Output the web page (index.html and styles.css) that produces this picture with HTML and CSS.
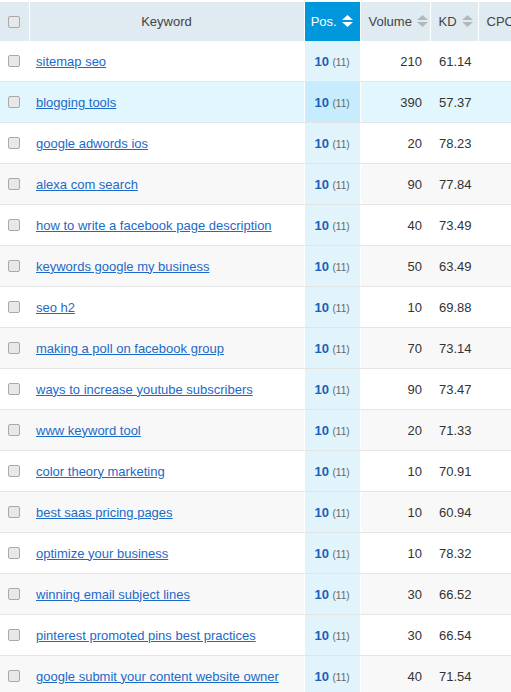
FILE: index.html
```html
<!DOCTYPE html>
<html>
<head>
<meta charset="utf-8">
<link rel="stylesheet" href="styles.css">
</head>
<body>
<div class="wrap">
<table class="kw">
  <colgroup>
    <col class="c-chk"><col class="c-kw"><col class="c-pos"><col class="c-vol"><col class="c-kd"><col class="c-cpc">
  </colgroup>
  <thead>
    <tr>
      <th class="chk"><span class="box"></span></th>
      <th class="th-kw">Keyword</th>
      <th class="th-pos">Pos. <svg class="sort" width="11" height="12" viewBox="0 0 11 12"><path d="M5.5 0 L11 5 L0 5 Z M0 7 L11 7 L5.5 12 Z" fill="#fff"/></svg></th>
      <th class="th-l">Volume <svg class="sort" width="11" height="12" viewBox="0 0 11 12"><path d="M5.5 0 L11 5 L0 5 Z M0 7 L11 7 L5.5 12 Z" fill="#b4b8bb"/></svg></th>
      <th class="th-l">KD <svg class="sort" width="11" height="12" viewBox="0 0 11 12"><path d="M5.5 0 L11 5 L0 5 Z M0 7 L11 7 L5.5 12 Z" fill="#b4b8bb"/></svg></th>
      <th class="th-l">CPC</th>
    </tr>
  </thead>
  <tbody>
    <tr><td class="chk"><span class="box"></span></td><td><a href="#">sitemap seo</a></td><td class="pos"><b>10</b> <small>(11)</small></td><td class="vol">210</td><td class="kd">61.14</td><td></td></tr>
    <tr class="hl"><td class="chk"><span class="box"></span></td><td><a href="#">blogging tools</a></td><td class="pos"><b>10</b> <small>(11)</small></td><td class="vol">390</td><td class="kd">57.37</td><td></td></tr>
    <tr><td class="chk"><span class="box"></span></td><td><a href="#">google adwords ios</a></td><td class="pos"><b>10</b> <small>(11)</small></td><td class="vol">20</td><td class="kd">78.23</td><td></td></tr>
    <tr class="alt"><td class="chk"><span class="box"></span></td><td><a href="#">alexa com search</a></td><td class="pos"><b>10</b> <small>(11)</small></td><td class="vol">90</td><td class="kd">77.84</td><td></td></tr>
    <tr><td class="chk"><span class="box"></span></td><td><a href="#">how to write a facebook page description</a></td><td class="pos"><b>10</b> <small>(11)</small></td><td class="vol">40</td><td class="kd">73.49</td><td></td></tr>
    <tr class="alt"><td class="chk"><span class="box"></span></td><td><a href="#">keywords google my business</a></td><td class="pos"><b>10</b> <small>(11)</small></td><td class="vol">50</td><td class="kd">63.49</td><td></td></tr>
    <tr><td class="chk"><span class="box"></span></td><td><a href="#">seo h2</a></td><td class="pos"><b>10</b> <small>(11)</small></td><td class="vol">10</td><td class="kd">69.88</td><td></td></tr>
    <tr class="alt"><td class="chk"><span class="box"></span></td><td><a href="#">making a poll on facebook group</a></td><td class="pos"><b>10</b> <small>(11)</small></td><td class="vol">70</td><td class="kd">73.14</td><td></td></tr>
    <tr><td class="chk"><span class="box"></span></td><td><a href="#">ways to increase youtube subscribers</a></td><td class="pos"><b>10</b> <small>(11)</small></td><td class="vol">90</td><td class="kd">73.47</td><td></td></tr>
    <tr class="alt"><td class="chk"><span class="box"></span></td><td><a href="#">www keyword tool</a></td><td class="pos"><b>10</b> <small>(11)</small></td><td class="vol">20</td><td class="kd">71.33</td><td></td></tr>
    <tr><td class="chk"><span class="box"></span></td><td><a href="#">color theory marketing</a></td><td class="pos"><b>10</b> <small>(11)</small></td><td class="vol">10</td><td class="kd">70.91</td><td></td></tr>
    <tr class="alt"><td class="chk"><span class="box"></span></td><td><a href="#">best saas pricing pages</a></td><td class="pos"><b>10</b> <small>(11)</small></td><td class="vol">10</td><td class="kd">60.94</td><td></td></tr>
    <tr><td class="chk"><span class="box"></span></td><td><a href="#">optimize your business</a></td><td class="pos"><b>10</b> <small>(11)</small></td><td class="vol">10</td><td class="kd">78.32</td><td></td></tr>
    <tr class="alt"><td class="chk"><span class="box"></span></td><td><a href="#">winning email subject lines</a></td><td class="pos"><b>10</b> <small>(11)</small></td><td class="vol">30</td><td class="kd">66.52</td><td></td></tr>
    <tr><td class="chk"><span class="box"></span></td><td><a href="#">pinterest promoted pins best practices</a></td><td class="pos"><b>10</b> <small>(11)</small></td><td class="vol">30</td><td class="kd">66.54</td><td></td></tr>
    <tr class="alt"><td class="chk"><span class="box"></span></td><td><a href="#">google submit your content website owner</a></td><td class="pos"><b>10</b> <small>(11)</small></td><td class="vol">40</td><td class="kd">71.54</td><td></td></tr>
  </tbody>
</table>
</div>
</body>
</html>
```
FILE: styles.css
```css
html, body {
  margin: 0;
  padding: 0;
  background: #fff;
  overflow: hidden;
}
.wrap {
  width: 511px;
  overflow: hidden;
  padding-top: 2px;
}
.kw {
  border-collapse: collapse;
  table-layout: fixed;
  width: 560px;
  font-family: "Liberation Sans", Arial, sans-serif;
  font-size: 13px;
  color: #333;
}
.c-chk { width: 29px; }
.c-kw { width: 275px; }
.c-pos { width: 56px; }
.c-vol { width: 70px; }
.c-kd { width: 48px; }
.c-cpc { width: 82px; }
thead th {
  height: 39px;
  padding: 0;
  background: #dfeaf1;
  border-left: 1px solid #fff;
  font-weight: normal;
  color: #444;
  white-space: nowrap;
}
thead th:first-child { border-left: none; }
.th-kw { text-align: center; }
.th-l { text-align: left; padding-left: 8px; }
.th-pos {
  background: #0097dc;
  color: #fff;
  text-align: center;
}
.sort {
  vertical-align: -1px;
  margin-left: 2px;
}
tbody td {
  height: 40px;
  padding: 0;
  border-bottom: 1px solid #e4e4e4;
  background: #fff;
  white-space: nowrap;
}
tbody tr.alt td { background: #f8f8f8; }
tbody tr.hl td {
  background-color: #e2f6fe;
  background-image: radial-gradient(#d7eff9 0.5px, transparent 0.7px);
  background-size: 4px 4px;
}
.chk { padding-left: 8px !important; }
.box {
  display: block;
  width: 10px;
  height: 10px;
  border: 1px solid #a9a9a9;
  border-radius: 2px;
  background: #e8e8e8;
}
tbody td a {
  color: #1c6ac8;
  text-decoration: underline;
  margin-left: 7px;
}
tbody td.pos,
tbody tr.alt td.pos {
  background-color: #e1f3fb;
  background-image: radial-gradient(#d6edf8 0.5px, transparent 0.7px);
  background-size: 4px 4px;
  text-align: center;
  border-left: 1px solid #fff;
  border-right: 1px solid #fff;
}
tbody tr.hl td.pos { background-color: #c6ecfd; }
.pos b { color: #1d5fb8; font-size: 13px; }
.pos small { color: #666; font-size: 10px; }
.vol { text-align: right; padding-right: 8px !important; }
.kd { padding-left: 9px !important; }
```
